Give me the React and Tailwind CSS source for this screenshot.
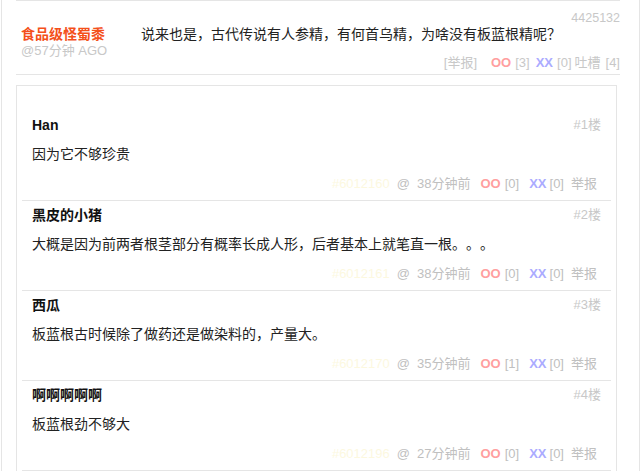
import React from 'react';

// 回复数据
const replies = [
  { id: 6012160, name: 'Han', floor: 1, text: '因为它不够珍贵', time: '38分钟前', oo: 0, xx: 0 },
  { id: 6012161, name: '黑皮的小猪', floor: 2, text: '大概是因为前两者根茎部分有概率长成人形，后者基本上就笔直一根。。。', time: '38分钟前', oo: 0, xx: 0 },
  { id: 6012170, name: '西瓜', floor: 3, text: '板蓝根古时候除了做药还是做染料的，产量大。', time: '35分钟前', oo: 1, xx: 0 },
  { id: 6012196, name: '啊啊啊啊啊', floor: 4, text: '板蓝根劲不够大', time: '27分钟前', oo: 0, xx: 0 },
];

const font = { fontFamily: '"Liberation Sans", "Noto Sans CJK SC", sans-serif' };

const ReplyRow = ({ r }) => (
  <div className="pl-[10px] pr-[10px] pt-[6px] pb-[8px] border-b border-[#e5e5e5]">
    <div className="flex justify-between leading-[16px]">
      <span className="text-[14px] font-bold text-[#111]">{r.name}</span>
      <span className="text-[13px] text-[#c8c8c8]">#{r.floor}楼</span>
    </div>
    <div className="mt-[13px] text-[14px] leading-[16px] text-[#222]">{r.text}</div>
    <div className="mt-[14px] mr-[4px] flex justify-end items-center text-[13px] leading-[16px] text-[#c0c0c0] whitespace-nowrap">
      <span className="text-[#fcf8df]">#{r.id}</span>
      <span className="ml-[7px]">@</span>
      <span className="ml-[7px]">{r.time}</span>
      <span className="ml-[10px] font-bold text-[#ff9f9f]">OO</span>
      <span className="ml-[4px]">[{r.oo}]</span>
      <span className="ml-[10px] font-bold text-[#ababff]">XX</span>
      <span className="ml-[3px]">[{r.xx}]</span>
      <span className="ml-[7px]">举报</span>
    </div>
  </div>
);

export default function App() {
  return (
    <div style={font} className="ml-px w-[639px] min-h-[471px] border-x border-[#e5e5e5] pl-[14px] bg-white [text-spacing-trim:space-all]">
      {/* 主帖 */}
      <div className="w-[604px] h-[75px] border-y border-[#e5e5e5] flex">
        <div className="w-[125px] pl-[5px] pt-[25px] shrink-0">
          <div className="text-[14px] leading-[16px] font-bold text-[#f4501a]">食品级怪蜀黍</div>
          <div className="mt-px text-[13px] leading-[16px] text-[#c8c8c8]">@57分钟 AGO</div>
        </div>
        <div className="flex-1 pt-[10px] flex flex-col">
          <div className="text-right text-[12.5px] leading-[15px] text-[#c8c8c8]">4425132</div>
          <div className="text-[14px] leading-[16px] text-[#222]">说来也是，古代传说有人参精，有何首乌精，为啥没有板蓝根精呢？</div>
          <div className="mt-[13px] flex justify-end items-center text-[13px] leading-[16px] text-[#c8c8c8] whitespace-nowrap">
            <span>[举报]</span>
            <span className="ml-[14px] font-bold text-[#ff9f9f]">OO</span>
            <span className="ml-[4px]">[3]</span>
            <span className="ml-[6px] font-bold text-[#ababff]">XX</span>
            <span className="ml-[4px]">[0]</span>
            <span className="ml-[3px]">吐槽</span>
            <span className="ml-[5px]">[4]</span>
          </div>
        </div>
      </div>

      {/* 回复列表 */}
      <div className="mt-[10px] w-[601px] border border-[#e5e5e5] px-[5px] pt-[25px]">
        {replies.map((r) => (
          <ReplyRow key={r.id} r={r} />
        ))}
      </div>
    </div>
  );
}
